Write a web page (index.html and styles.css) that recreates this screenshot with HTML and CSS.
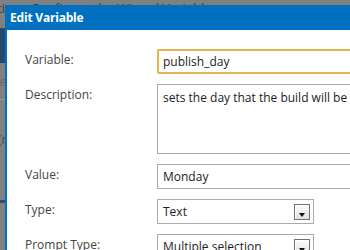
FILE: index.html
```html
<!DOCTYPE html>
<html lang="en">
<head>
  <meta charset="UTF-8">
  <meta name="viewport" content="width=device-width, initial-scale=1.0">
  <title>Edit Variable</title>
  <link rel="stylesheet" href="styles.css">
</head>
<body>
  <div class="page">
    <div class="page-title">Configuration &nbsp; Configure the Wizard Variables</div>
    <div class="page-nav"></div>
    <div class="page-tabs">Release</div>
    <div class="page-row">(none)</div>
    <div class="page-rule"></div>
  </div>

  <div class="dialog">
    <div class="dialog-header">Edit Variable</div>
    <div class="dialog-body">
      <label class="field-label">Variable:</label>
      <input type="text" class="field-input focused" value="publish_day">

      <label class="field-label">Description:</label>
      <textarea class="field-area">sets the day that the build will be published</textarea>

      <label class="field-label">Value:</label>
      <input type="text" class="field-input" value="Monday">

      <label class="field-label">Type:</label>
      <div class="select">
        <span class="select-text">Text</span>
        <span class="select-btn"><span class="arrow"></span></span>
      </div>

      <label class="field-label">Prompt Type:</label>
      <div class="select">
        <span class="select-text">Multiple selection</span>
        <span class="select-btn"><span class="arrow"></span></span>
      </div>
    </div>
  </div>
</body>
</html>
```

FILE: styles.css
```css
body {
  margin: 0;
  background: #808080;
  font-family: 'Open Sans', 'DejaVu Sans', sans-serif;
  overflow: hidden;
  width: 350px;
  height: 250px;
  position: relative;
}

/* dimmed page behind the dialog */
.page {
  color: #3a3a3a;
}

.page-title {
  font-size: 13px;
  line-height: 16px;
  white-space: nowrap;
  text-indent: -62px;
}

.page-nav {
  height: 35px;
  margin-top: 12px;
  background: #244a6e;
}

.page-tabs {
  height: 36px;
  line-height: 36px;
  font-size: 13px;
  color: #6a6a6a;
  text-indent: -40px;
  border-bottom: 1px solid #9a9a9a;
}

.page-row {
  font-size: 12px;
  line-height: 20px;
  margin-top: 30px;
  text-indent: -2px;
  color: #4a4a4a;
}

.page-rule {
  height: 3px;
  margin-top: 50px;
  background: #2e4f70;
}

/* dialog */
.dialog {
  position: absolute;
  left: 5px;
  top: 5px;
  width: 420px;
  height: 300px;
  background: #fff;
  border-left: 2px solid #0070c0;
}

.dialog-header {
  height: 25px;
  line-height: 26px;
  padding-left: 3px;
  background: #0070c0;
  color: #fff;
  font-weight: bold;
  font-size: 12px;
  letter-spacing: -0.2px;
}

.dialog-body {
  display: grid;
  grid-template-columns: 132px 1fr;
  row-gap: 10px;
  padding: 19px 0 0 18px;
  align-items: start;
}

.field-label {
  font-size: 12px;
  line-height: 22px;
  color: #444;
}

.field-input,
.field-area,
.select {
  box-sizing: border-box;
  font-family: inherit;
  font-size: 12px;
  color: #1c1c1c;
  background: #fff;
  border: 1px solid #a9a9a9;
  margin: 0;
  outline: none;
}

.field-input {
  width: 240px;
  height: 25px;
  padding: 0 5px;
}

.field-input.focused {
  border: 2px solid #e2b453;
  border-radius: 2px;
  padding: 0 4px;
}

.field-area {
  width: 260px;
  height: 70px;
  padding: 5px;
  resize: none;
  line-height: 16px;
  white-space: nowrap;
  overflow: hidden;
}

.select {
  width: 157px;
  height: 25px;
  display: flex;
  align-items: center;
  justify-content: space-between;
  padding: 0 3px 0 5px;
}

.select-btn {
  width: 16px;
  height: 16px;
  box-sizing: border-box;
  border: 1px solid #707070;
  background: linear-gradient(#fbfbfb, #e2e2e2);
  box-shadow: inset 1px 1px 0 #fff;
  display: flex;
  justify-content: center;
  padding-top: 8px;
}

.arrow {
  width: 0;
  height: 0;
  border-top: 4px solid #111;
  border-left: 3.5px solid transparent;
  border-right: 3.5px solid transparent;
}
```
